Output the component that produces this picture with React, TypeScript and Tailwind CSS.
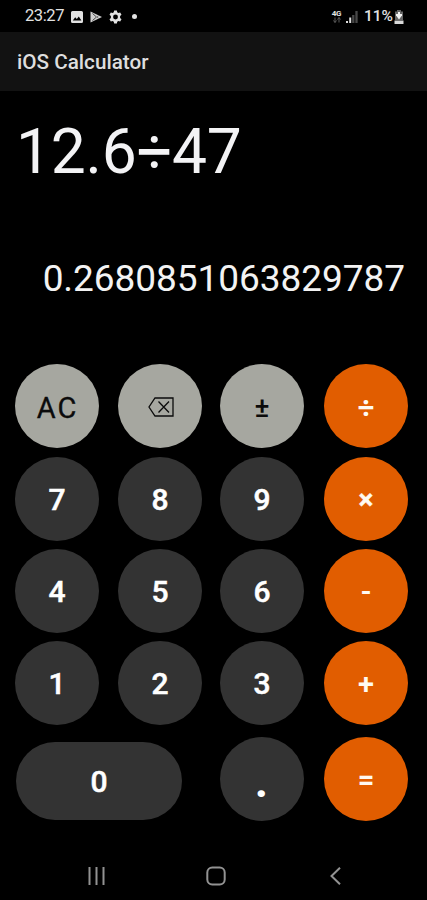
import type { ReactNode } from "react";

type KeyProps = { children: ReactNode; tone?: string; className?: string };

const dark = "bg-[#333333] text-white text-[30px] font-medium pt-[2px] [-webkit-text-stroke:0.5px_currentColor]";
const light = "bg-[#a6a7a0] text-[#0b0b0b]";
const orange = "bg-[#e15d00] text-[#fffaf2]";

function Key({ children, tone = dark, className = "h-[84px] w-[84px]" }: KeyProps) {
  return (
    <button className={`flex items-center justify-center rounded-full leading-none ${tone} ${className}`}>
      {children}
    </button>
  );
}

function StatusBar() {
  return (
    <div className="flex h-[32px] items-center justify-between pl-[25px] pr-[23px] pt-px text-[#e2e2e2]">
      <div className="flex items-center">
        <span className="w-[46px] text-[16.500px] leading-none tracking-[-0.4px]">23:27</span>
        <svg width="12" height="12" viewBox="0 0 12 12" className="mr-[7px]">
          <path fillRule="evenodd" fill="currentColor" d="M1.5 0h9A1.5 1.5 0 0 1 12 1.5v9a1.5 1.5 0 0 1-1.5 1.5h-9A1.5 1.5 0 0 1 0 10.500v-9A1.500 1.500 0 0 1 1.500 0ZM1.800 9.600h8.600L7.800 5.600 5.800 8.100 4.200 6.300Z" />
        </svg>
        <svg width="12" height="12" viewBox="0 0 12 12" className="mr-[7px]">
          <path d="M.5.5 12 6 .5 11.500Z" fill="#d0d0d0" />
          <path d="M2.500 2.500 6.500 6l-4 3.500" fill="none" stroke="#4a4a4a" strokeWidth="1" />
          <path d="m7 6 1.500-1.200M7 6l1.500 1.200" stroke="#4a4a4a" strokeWidth=".7" />
        </svg>
        <svg width="13" height="14" viewBox="0 0 24 24" className="mr-[10px]">
          <path fill="currentColor" fillRule="evenodd" d="M9.500 0h5l.7 3.300 2 1.200 3.400-1 2.500 4.300-2.600 2.500v3.400l2.600 2.500-2.500 4.300-3.400-1-2 1.200-.7 3.300h-5l-.7-3.300-2-1.200-3.400 1-2.500-4.300 2.600-2.500v-3.400L.9 7.800l2.500-4.300 3.400 1 2-1.200ZM12 7.500a4.500 4.500 0 1 0 0 9 4.500 4.500 0 0 0 0-9Z" />
        </svg>
        <span className="h-[5px] w-[5px] rounded-full bg-current" />
      </div>
      <div className="flex items-center">
        <div className="mr-[4px] flex w-[11px] flex-col items-center font-bold leading-none">
          <span className="text-[8px] leading-[7px] tracking-[-0.3px]">4G</span>
          <svg width="8" height="6" viewBox="0 0 8 6" fill="none" stroke="#5a5a5a" strokeWidth="1">
            <path d="M2 .5v5M.5 3.500 2 5.500l1.500-2M6 5.500v-5M4.500 2.500 6 .5l1.500 2" />
          </svg>
        </div>
        <svg width="13" height="13" viewBox="0 0 13 13" className="mr-[5px]">
          <path d="M1 11v2M4.200 7.500V13" stroke="#dddddd" strokeWidth="2" />
          <path d="M7.300 5v8M10.500 1v12" stroke="#484848" strokeWidth="2.300" />
        </svg>
        <span className="w-[30px] pt-px text-[15.500px] font-medium leading-none">11%</span>
        <svg width="10" height="14" viewBox="0 0 10 14">
          <path d="M3 0h4v1.500h2V10H1V1.500h2Z" fill="#666666" />
          <path d="M5 2v6M2 5h6" stroke="#f2f2f2" strokeWidth="2" />
          <path d="M2.500 6h5L5 9.500Z" fill="#f2f2f2" />
          <path d="M.5 10.500h9V14h-9Z" fill="#d8d8d8" />
        </svg>
      </div>
    </div>
  );
}

export default function App() {
  return (
    <div className="flex h-[900px] w-[427px] flex-col overflow-hidden bg-black font-['Roboto',sans-serif]">
      <StatusBar />
      <header className="flex h-[59px] items-center bg-[#121212] pl-[17px] pt-px">
        <h1 className="text-[20.700px] font-medium leading-none text-[#dedede]">iOS Calculator</h1>
      </header>
      <div className="mt-[24px] h-[74px] pl-[16px] text-[62.300px] leading-[74px] tracking-[-0.2px] text-[#f3f3f5]">12.6÷47</div>
      <div className="mt-[68px] h-[44px] pr-[22px] text-right text-[37px] leading-[44px] tracking-[-0.05px] text-[#f3f3f3]">
        0.2680851063829787
      </div>
      <div className="ml-[15px] mt-[63px] grid grid-cols-[103px_102px_104px_84px] grid-rows-[93px_92px_92px_96px_84px]">
        <Key tone={`${light} text-[29px] tracking-[2px] pt-[4px] pl-[1px] [-webkit-text-stroke:0.3px_currentColor]`}>AC</Key>
        <Key tone={light}>
          <svg width="26" height="20" viewBox="0 0 26 20" className="ml-px mt-[1px]" fill="none" stroke="currentColor" strokeWidth="1.300">
            <path d="M7 1h18v18H7L1 10Z" />
            <path d="m10.500 4.500 10.500 11M21 4.500l-10.500 11" />
          </svg>
        </Key>
        <Key tone={`${light} text-[28px] font-medium pt-[4px]`}>±</Key>
        <Key tone={`${orange} text-[29px] font-bold pt-[4px]`}>÷</Key>
        <Key>7</Key>
        <Key>8</Key>
        <Key>9</Key>
        <Key tone={`${orange} text-[28px] font-bold pt-[2px] [-webkit-text-stroke:0.4px_currentColor]`}>×</Key>
        <Key>4</Key>
        <Key>5</Key>
        <Key>6</Key>
        <Key tone={`${orange} text-[29px] font-semibold pt-[3px]`}>-</Key>
        <Key>1</Key>
        <Key>2</Key>
        <Key>3</Key>
        <Key tone={`${orange} text-[29px] font-semibold pt-[3px]`}>+</Key>
        <Key className="col-span-2 ml-px mt-[5px] h-[78px] w-[166px]">0</Key>
        <Key tone="bg-[#333333] text-white text-[46px] font-bold pt-[3px] pr-px">.</Key>
        <Key tone={`${orange} text-[29px] font-bold pt-[2px]`}>=</Key>
      </div>
      <nav className="mt-[45px] flex h-[20px] items-center pl-[88px] text-[#929292]">
        <svg width="17" height="18" viewBox="0 0 17 18" stroke="currentColor" strokeWidth="2">
          <path d="M1.500 0v18M8.500 0v18M15.500 0v18" />
        </svg>
        <svg width="20" height="20" viewBox="0 0 20 20" className="ml-[101px]" fill="none" stroke="currentColor" strokeWidth="2">
          <rect x="1.300" y="1.500" width="17.400" height="17" rx="5" />
        </svg>
        <svg width="11" height="18" viewBox="0 0 11 18" className="ml-[104px]" fill="none" stroke="currentColor" strokeWidth="2">
          <path d="M10 .7 1.500 9l8.500 8.300" />
        </svg>
      </nav>
    </div>
  );
}
